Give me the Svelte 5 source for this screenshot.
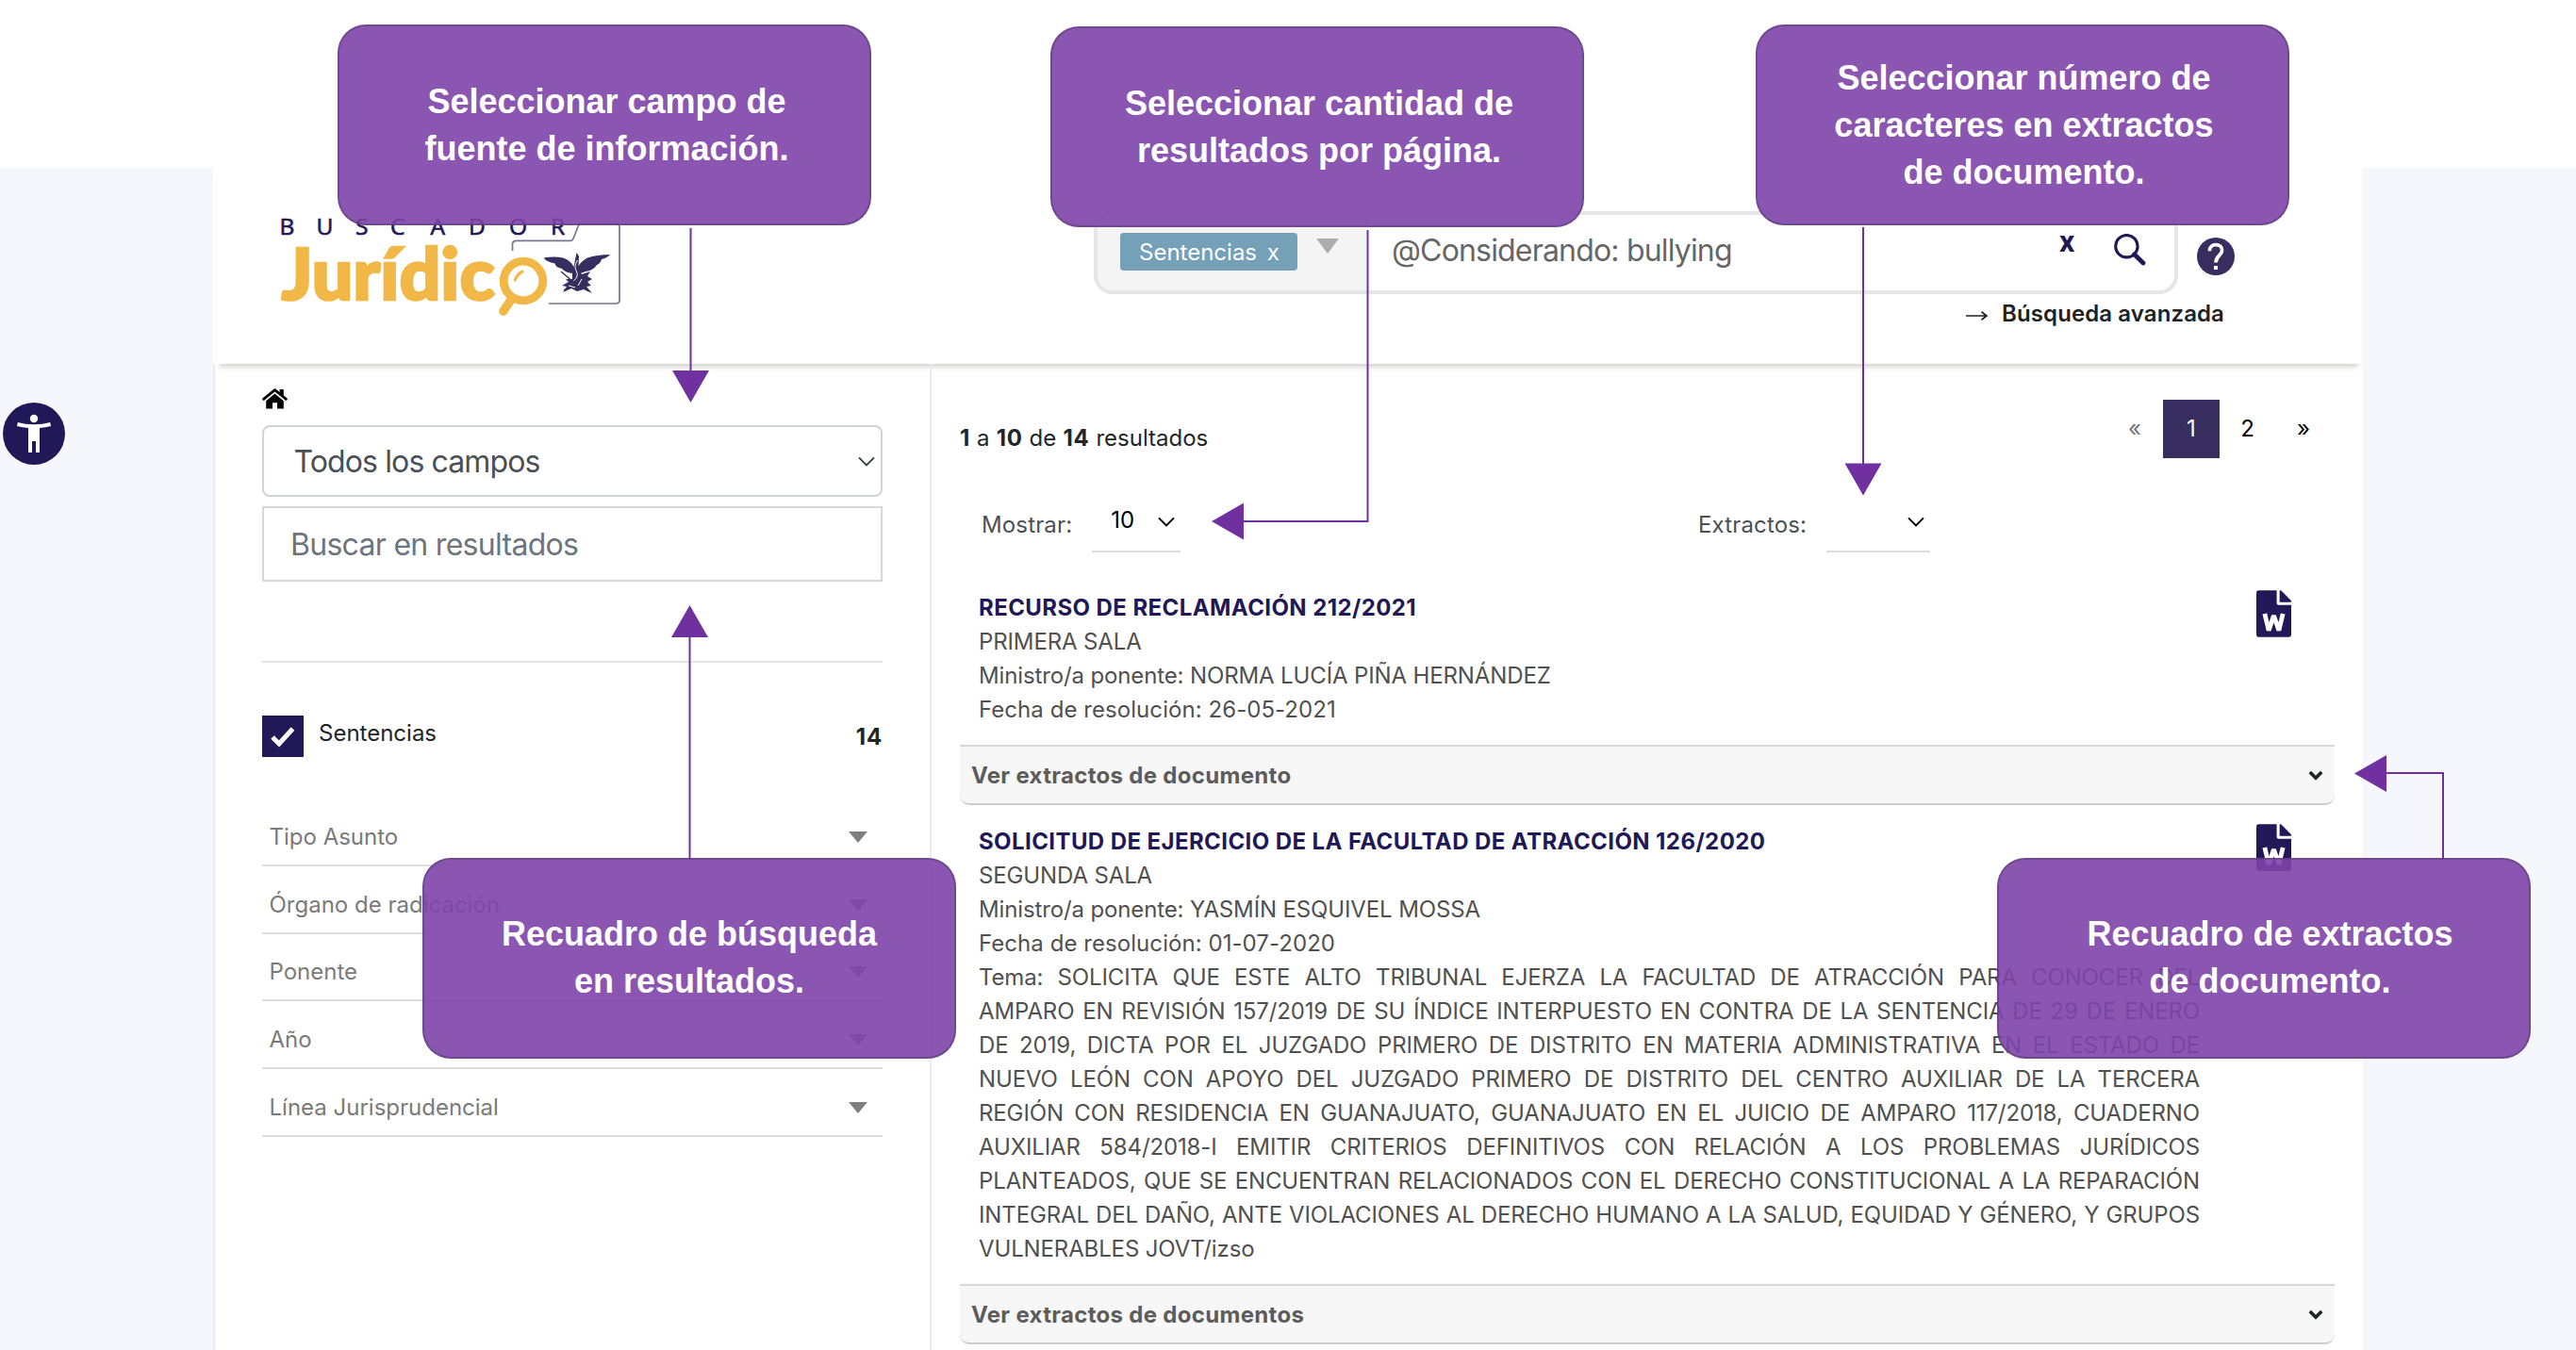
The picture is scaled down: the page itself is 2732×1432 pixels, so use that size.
<script>
  const filters = [
    'Tipo Asunto',
    'Órgano de radicación',
    'Ponente',
    'Año',
    'Línea Jurisprudencial'
  ];

  const results = [
    {
      title: 'RECURSO DE RECLAMACIÓN 212/2021',
      court: 'PRIMERA SALA',
      minister: 'NORMA LUCÍA PIÑA HERNÁNDEZ',
      date: '26-05-2021',
      topic: [],
      more: 'Ver extractos de documento'
    },
    {
      title: 'SOLICITUD DE EJERCICIO DE LA FACULTAD DE ATRACCIÓN 126/2020',
      court: 'SEGUNDA SALA',
      minister: 'YASMÍN ESQUIVEL MOSSA',
      date: '01-07-2020',
      topic: [
        'Tema: SOLICITA QUE ESTE ALTO TRIBUNAL EJERZA LA FACULTAD DE ATRACCIÓN PARA CONOCER DEL',
        'AMPARO EN REVISIÓN 157/2019 DE SU ÍNDICE INTERPUESTO EN CONTRA DE LA SENTENCIA DE 29 DE ENERO',
        'DE 2019, DICTA POR EL JUZGADO PRIMERO DE DISTRITO EN MATERIA ADMINISTRATIVA EN EL ESTADO DE',
        'NUEVO LEÓN CON APOYO DEL JUZGADO PRIMERO DE DISTRITO DEL CENTRO AUXILIAR DE LA TERCERA',
        'REGIÓN CON RESIDENCIA EN GUANAJUATO, GUANAJUATO EN EL JUICIO DE AMPARO 117/2018, CUADERNO',
        'AUXILIAR 584/2018-I EMITIR CRITERIOS DEFINITIVOS CON RELACIÓN A LOS PROBLEMAS JURÍDICOS',
        'PLANTEADOS, QUE SE ENCUENTRAN RELACIONADOS CON EL DERECHO CONSTITUCIONAL A LA REPARACIÓN',
        'INTEGRAL DEL DAÑO, ANTE VIOLACIONES AL DERECHO HUMANO A LA SALUD, EQUIDAD Y GÉNERO, Y GRUPOS',
        'VULNERABLES JOVT/izso'
      ],
      more: 'Ver extractos de documentos'
    }
  ];

  const callouts = [
    { id: 'source', lines: ['Seleccionar campo de', 'fuente de información.'] },
    { id: 'amount', lines: ['Seleccionar cantidad de', 'resultados por página.'] },
    { id: 'chars', lines: ['Seleccionar número de', 'caracteres en extractos', 'de documento.'] },
    { id: 'search', lines: ['Recuadro de búsqueda', 'en resultados.'] },
    { id: 'extracts', lines: ['Recuadro de extractos', 'de documento.'] }
  ];
</script>

<div class="page">
  <div class="backdrop">
    <aside class="rail">
      <svg class="access" viewBox="0 0 66 66">
        <circle cx="33" cy="33" r="33" fill="#211858" />
        <circle cx="33" cy="17" r="4.2" fill="#fff" />
        <path d="M15.8 21 Q33 25.4 50.2 21 L51 25 Q45 26.6 39 27 V53 H35 V41 H31 V53 H27 V27 Q21 26.6 15 25 Z" fill="#fff" />
      </svg>
    </aside>

    <div class="site">
      <header>
        <svg class="logo" viewBox="290 220 380 120">
          <g class="tag">
            <text x="296.5" y="249.3">B</text>
            <text x="335.5" y="249.3">U</text>
            <text x="377" y="249.3">S</text>
            <text x="414" y="249.3">C</text>
            <text x="456.5" y="249.3">A</text>
            <text x="497" y="249.3">D</text>
            <text x="540" y="249.3">O</text>
            <text x="584" y="249.3">R</text>
          </g>
          <text class="name" x="298.5" y="317.500">Jurídic</text>
          <path d="M543.5 266 V259 Q543.5 255.4 548 255.4 H605 Q607 255.4 608 253 L613.4 239.5 Q614.3 237.4 616.5 237.4 H653 Q657 237.4 657 241 V318.6 Q657 322 653 322 H581.7" fill="none" stroke="#77758f" stroke-width="1.7" />
          <circle cx="555" cy="298" r="20.8" fill="none" stroke="#f1b847" stroke-width="8.8" />
          <path d="M543 316.5 L533.8 330.2" stroke="#f1b847" stroke-width="9.4" stroke-linecap="round" />
          <path d="M546.2 297 Q548.5 290.5 554 288.2" stroke="#f1b847" stroke-width="3.2" fill="none" stroke-linecap="round" />
          <g fill="#352e5e">
            <path d="M576.5 273.5 Q589 271.5 597 273.5 Q605 276 608.5 283 L611.5 268 L614 272 L613.5 282 Q617 276.5 623 273.5 Q633 270 647 270 Q644 273.5 638 275 Q637 279 633 281 Q629 287 621 288 L615 290 L610 290 Q600 290 596 285 Q589 283.5 588.5 279.5 Q580 278 576.5 273.5 Z" />
            <path d="M607 288 L615 287 L617 291 L626 288 L623 293 L628 296 L623 299 L627 303 L622 304 L628 311 L619 307 L612 309 L606 306 L597 310 L601 304 L596 303 L603 299 L600 296 L607 296 Z" />
            <path d="M595 288 L609 300 M605 303 L598 308 M618 304 L624 309" stroke="#352e5e" stroke-width="1.4" />
            <path d="M612.5 276 Q608 283 611.5 288 Q614 293 608.5 298 M617 296 L613 303 M603 303 L610 305" stroke="#fff" stroke-width="1" fill="none" />
          </g>
        </svg>

        <div class="search-area">
          <div class="search-row">
            <div class="searchbox">
              <div class="scope">
                <span class="chip">Sentencias <b>x</b></span>
                <svg class="scope-arrow" viewBox="0 0 24 16"><path d="M0 0H24L12 16Z" fill="#adadad" /></svg>
              </div>
              <span class="query">@Considerando: bullying</span>
              <span class="clear">x</span>
              <svg class="lens" viewBox="0 0 34 34">
                <circle cx="13.4" cy="13.2" r="11.7" fill="none" stroke="#211858" stroke-width="3.1" />
                <path d="M21.5 21.8 L31 31" stroke="#211858" stroke-width="4.8" stroke-linecap="round" />
              </svg>
            </div>
            <svg class="help" viewBox="0 0 40 40">
              <circle cx="20" cy="20" r="20" fill="#372d5e" />
              <path d="M13.4 14.2 C13.4 9.8 16.2 7.6 20 7.6 C23.9 7.6 26.6 10 26.6 13.4 C26.6 18.6 20 19.4 20 26.4" fill="none" stroke="#fff" stroke-width="3.7" />
              <rect x="18" y="30" width="4" height="4" fill="#fff" />
            </svg>
          </div>
          <div class="advanced">
            <svg viewBox="0 0 24 12"><path d="M0 6H21M16.5 1.8L22 6L16.5 10.2" fill="none" stroke="#212121" stroke-width="1.7" /></svg>
            <span>Búsqueda avanzada</span>
          </div>
        </div>
      </header>

      <div class="columns">
        <section class="sidebar">
          <svg class="home" viewBox="0 0 27 22">
            <path d="M18.6 1H22.8V8.2L18.6 4.6Z" />
            <path d="M1.6 11.4L13.5 1.6L25.4 11.4" fill="none" stroke="#000" stroke-width="2.7" stroke-linecap="round" stroke-linejoin="round" />
            <path d="M13.5 5.6L22.8 13.2V21.5H16V15.2H11V21.5H4.2V13.2Z" />
          </svg>
          <div class="field select">
            <span>Todos los campos</span>
            <svg viewBox="0 0 18 11"><path d="M1 1.4L9 9.4L17 1.4" fill="none" stroke="#343a40" stroke-width="1.8" /></svg>
          </div>
          <div class="field input"><span>Buscar en resultados</span></div>
          <hr />
          <div class="facet">
            <svg class="check" viewBox="0 0 44 44">
              <rect width="44" height="44" fill="#211858" />
              <path d="M11 23L18 30L32.5 14" fill="none" stroke="#fff" stroke-width="5" />
            </svg>
            <span class="facet-name">Sentencias</span>
            <strong>14</strong>
          </div>
          <ul>
            {#each filters as filter}
              <li>
                <span>{filter}</span>
                <svg viewBox="0 0 20 12"><path d="M0 0H20L10 12Z" fill="#7f7f7f" /></svg>
              </li>
            {/each}
          </ul>
        </section>

        <main>
          <div class="summary">
            <p><b>1</b> a <b>10</b> de <b>14</b> resultados</p>
            <nav>
              <span class="step muted">«</span>
              <span class="current">1</span>
              <span class="number">2</span>
              <span class="step">»</span>
            </nav>
          </div>

          <div class="controls">
            <div class="control">
              <span class="label">Mostrar:</span>
              <div class="pick">
                <span>10</span>
                <svg viewBox="0 0 18 11"><path d="M1 1.4L9 9.4L17 1.4" fill="none" stroke="#000" stroke-width="2" /></svg>
              </div>
            </div>
            <div class="control">
              <span class="label">Extractos:</span>
              <div class="pick wide">
                <svg viewBox="0 0 18 11"><path d="M1 1.4L9 9.4L17 1.4" fill="none" stroke="#000" stroke-width="2" /></svg>
              </div>
            </div>
          </div>

          {#each results as r}
            <article>
              <div class="text">
                <h2>{r.title}</h2>
                <p>{r.court}</p>
                <p>Ministro/a ponente: {r.minister}</p>
                <p class="date">Fecha de resolución: {r.date}</p>
                {#each r.topic as line, i}
                  <p class:justified={i < r.topic.length - 1}>{line}</p>
                {/each}
              </div>
              <svg class="word" viewBox="0 0 384 512">
                <path fill="#211858" d="M224 136V0H24C10.7 0 0 10.7 0 24v464c0 13.3 10.7 24 24 24h336c13.3 0 24-10.7 24-24V160H248c-13.2 0-24-10.8-24-24zM384 121.9v6.1H256V0h6.1c6.4 0 12.5 2.5 17 7l97.9 98c4.5 4.500 7 10.600 7 16.900z" />
                <path d="M92 256L136 440L192 276L248 440L292 256" fill="none" stroke="#fff" stroke-width="50" stroke-linejoin="bevel" />
              </svg>
            </article>
            <div class="more">
              <span>{r.more}</span>
              <svg viewBox="0 0 16 11"><path d="M1.8 2L8 8.2L14.2 2" fill="none" stroke="#212529" stroke-width="3.6" /></svg>
            </div>
          {/each}
        </main>
      </div>
    </div>
  </div>

  <svg class="arrows" viewBox="0 0 2732 1432">
    <g fill="none" stroke="#7030a0" stroke-width="2">
      <path d="M732.5 242V394M1450.5 244V553H1318M1976 241V492M731.5 912V675M2591 912V820H2530" />
    </g>
    <g fill="#7030a0">
      <path d="M713 393H752L732.5 427Z" />
      <path d="M1319 533.5V572.5L1285 553Z" />
      <path d="M1956.5 491.5H1995.5L1976 525.5Z" />
      <path d="M712 676H751L731.5 642Z" />
      <path d="M2531 801V840L2497 820.5Z" />
    </g>
  </svg>

  {#each callouts as c}
    <div class="callout {c.id}">
      {#each c.lines as line}<span>{line}</span>{/each}
    </div>
  {/each}
</div>

<style>
  :global(body) { margin: 0; background: #fff; }
  * { box-sizing: border-box; }
  p, h2, ul, hr { margin: 0; padding: 0; }
  svg { display: block; flex: none; }

  .page {
    position: relative;
    width: 2732px;
    height: 1432px;
    padding-top: 178px;
    overflow: hidden;
    background: #fff;
    color: #212529;
    font: 24px/38px Inter, "Liberation Sans", sans-serif;
  }
  .backdrop { display: flex; height: 1254px; background: #f6f7fc; }
  .rail { width: 226px; padding: 249px 0 0 3px; }
  .access { width: 66px; height: 66px; }
  .site { display: flex; flex-direction: column; width: 2280px; background: #fff; }

  header {
    display: flex;
    flex: none;
    height: 208px;
    margin: 0 2px 0 4px;
    padding: 42px 0 0 60px;
    box-shadow: 0 6px 5px -3px rgba(60, 45, 35, 0.22);
  }
  .logo { width: 380px; height: 120px; }
  .tag {
    fill: #211858;
    stroke: #211858;
    stroke-width: 0.7px;
    font: 24.5px "Open Sans", sans-serif;
  }
  .name {
    fill: #f1b847;
    stroke: #f1b847;
    stroke-width: 2.6px;
    font: 900 77px Lato, sans-serif;
    letter-spacing: 0;
  }

  .search-area { margin: 4px 0 0 490px; }
  .search-row { display: flex; align-items: flex-start; }
  .searchbox {
    display: flex;
    align-items: center;
    width: 1150px;
    height: 88px;
    border: 4px solid #e6e6e6;
    border-radius: 20px;
    overflow: hidden;
  }
  .scope {
    display: flex;
    align-items: flex-start;
    width: 287px;
    height: 80px;
    padding: 19px 0 0 24px;
    background: #f4f4f4;
  }
  .chip {
    width: 188px;
    height: 40px;
    padding-left: 20px;
    border-radius: 4px;
    background: #74a0b8;
    color: #fff;
    line-height: 41px;
    white-space: pre;
  }
  .chip b { margin-left: 4px; font-weight: 400; }
  .scope-arrow { width: 24px; height: 16px; margin: 6px 0 0 20px; }
  .query {
    width: 708px;
    padding: 0 0 4px 25px;
    color: #666;
    font-size: 32px;
    letter-spacing: -0.82px;
  }
  .clear {
    width: 57px;
    padding: 0 0 25px 25px;
    color: #211858;
    font: 700 32px/36px Roboto, sans-serif;
  }
  .lens { width: 34px; height: 34px; margin: 0 0 6px 26px; }
  .help { width: 40px; height: 40px; margin: 28px 0 0 20px; }
  .advanced {
    display: flex;
    align-items: center;
    justify-content: flex-end;
    gap: 14px;
    width: 1199px;
    margin-top: 2px;
    color: #212121;
    font-weight: 600;
    letter-spacing: 0.1px;
  }
  .advanced svg { width: 24px; height: 12px; margin-top: 3px; }

  .columns { display: flex; flex: 1; }
  .sidebar {
    width: 762px;
    padding: 26px 50px 0 50px;
    border: 0 solid #e9ecef;
    border-width: 0 2px;
  }
  .home { width: 27px; height: 22px; margin: 0 0 17px; }
  .field {
    display: flex;
    align-items: center;
    width: 658px;
    font-size: 32px;
  }
  .select {
    justify-content: space-between;
    height: 76px;
    padding: 0 6px 0 31.5px;
    border: 2px solid #ced4da;
    border-radius: 8px;
    color: #495057;
    letter-spacing: -0.88px;
  }
  .select span, .input span { padding-top: 2px; }
  .select svg { width: 18px; height: 11px; }
  .input {
    height: 80px;
    margin-top: 10px;
    padding-left: 28px;
    border: 2px solid #d8d8d8;
    color: #6c757d;
    letter-spacing: -0.71px;
  }
  hr { width: 658px; height: 2px; margin-top: 84px; border: 0; background: #e2e2e2; }
  .facet { display: flex; width: 658px; height: 44px; margin-top: 56px; }
  .check { width: 44px; height: 44px; }
  .facet-name { flex: 1; padding-left: 16px; }
  .facet strong { padding-top: 4px; letter-spacing: 0.8px; }
  ul { width: 658px; margin-top: 44px; list-style: none; }
  li {
    display: flex;
    align-items: center;
    justify-content: space-between;
    height: 71.75px;
    padding: 12px 16px 0 7.5px;
    border-bottom: 2px solid #dcdcdc;
    color: #7a7a7a;
  }
  li svg { width: 20px; height: 12px; }

  main { width: 1518px; padding: 38px 30px 0; }
  .summary { display: flex; justify-content: space-between; height: 62px; }
  .summary p { padding-top: 22px; word-spacing: 0.4px; }
  .summary b { letter-spacing: 0.6px; }
  nav { display: flex; align-items: center; padding-right: 3px; color: #000; }
  nav span { text-align: center; }
  .step { width: 60px; }
  .muted { color: #6c757d; }
  .current { width: 60px; background: #372d5e; color: #fff; line-height: 62px; }
  .number { width: 59px; }

  .controls { display: flex; height: 54px; margin: 46px 0 40px; }
  .control { display: flex; flex: none; width: 760px; padding-left: 23px; }
  .control + .control { width: auto; }
  .label { padding-top: 6px; color: #495057; letter-spacing: 0.15px; }
  .pick {
    display: flex;
    align-items: flex-start;
    justify-content: space-between;
    width: 94px;
    margin-left: 21px;
    padding: 0.5px 6px 0 20px;
    border-bottom: 2px solid #dcdcdc;
    color: #000;
  }
  .pick svg { width: 18px; height: 11px; margin-top: 15px; }
  .wide { width: 110px; justify-content: flex-end; }

  article { display: flex; width: 1458px; padding-bottom: 20px; color: #505050; letter-spacing: -0.13px; }
  .text { width: 1295px; margin-left: 20px; }
  .text p, h2 { height: 36px; white-space: nowrap; }
  h2 { color: #211858; font-size: 24px; line-height: 38px; font-weight: 700; letter-spacing: 0.41px; }
  .text .date { letter-spacing: 0.06px; }
  .justified { text-align-last: justify; }
  .word { width: 37px; height: 50px; margin-left: 60px; }

  .more {
    display: flex;
    align-items: center;
    justify-content: space-between;
    width: 1458px;
    height: 64px;
    margin-bottom: 20px;
    padding: 0 12px;
    border-top: 2px solid #d8d8d8;
    border-bottom: 2px solid #ccc;
    border-radius: 0 0 10px 10px;
    background: #f7f7f7;
    color: #5c5c5c;
    font-weight: 700;
    letter-spacing: 0.31px;
  }
  .more span { padding-top: 1px; }
  .more svg { width: 16px; height: 11px; }

  .arrows { position: absolute; inset: 0; width: 2732px; height: 1432px; }
  .callout {
    position: absolute;
    display: flex;
    flex-direction: column;
    align-items: center;
    justify-content: center;
    width: 566px;
    height: 213px;
    border: 2px solid rgba(80, 55, 105, 0.45);
    border-radius: 30px;
    background: rgba(126, 68, 168, 0.9);
    color: #fff;
    font: 700 36px/50px "Liberation Sans", Arial, sans-serif;
  }
  .source { left: 358px; top: 26px; padding-left: 5px; }
  .amount { left: 1114px; top: 28px; padding-left: 4px; }
  .chars { left: 1862px; top: 26px; padding-left: 3px; }
  .search { left: 448px; top: 910px; padding-bottom: 2px; }
  .extracts { left: 2117.5px; top: 910px; padding: 0 0 2px 14px; }
</style>
